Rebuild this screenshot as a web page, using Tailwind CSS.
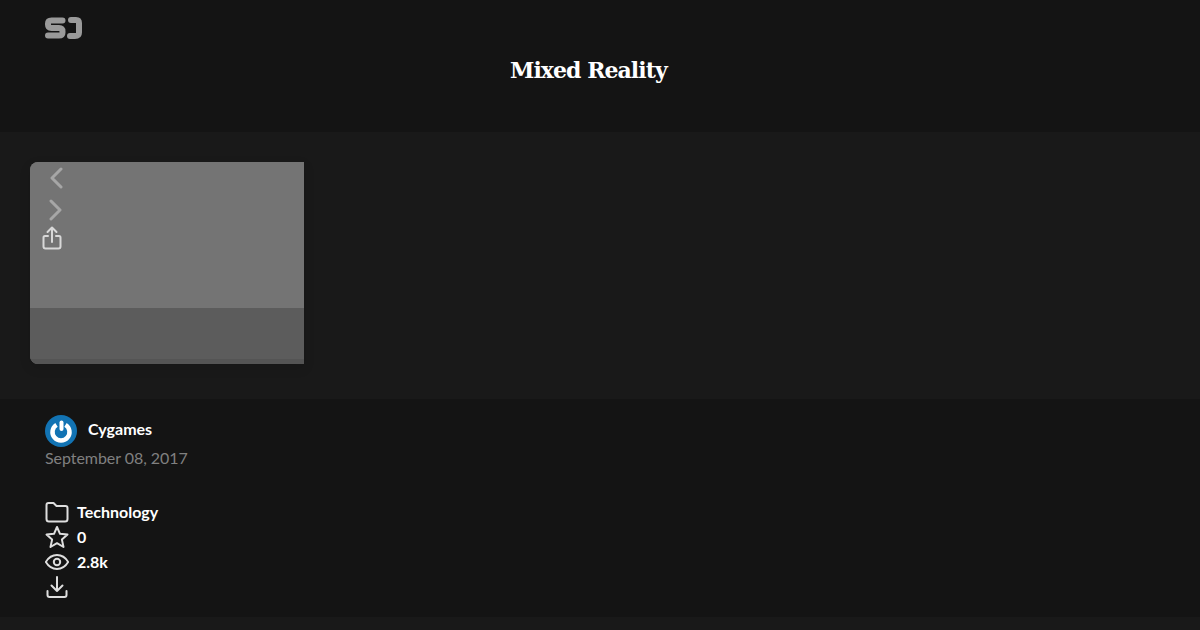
<!DOCTYPE html>
<html lang="en">
  <head>
    <meta charset="UTF-8" />
    <title>Mixed Reality</title>
    <script src="https://cdn.jsdelivr.net/npm/@tailwindcss/browser@4"></script>
  </head>
  <body class="h-[630px] overflow-hidden bg-[#191919] font-['Lato',sans-serif] text-white">
    <!-- header -->
    <header class="h-[132px] bg-[#141414] pl-[45px] pt-[16px]">
      <svg class="block h-[24px] w-[37px]" viewBox="0 0 37 24" fill="none" stroke="#9a9a9a" stroke-width="6" stroke-linecap="round">
        <path d="M17.500 4.500H6.500Q3 4.500 3 7.500V8.500Q3 12 6.500 12H14Q17.500 12 17.500 15.500V16.500Q17.500 19.500 14 19.500H3" />
        <path d="M26 4H31Q34 4 34 7V16.500Q34 20 30 20H25" />
      </svg>
      <h1 class="mt-[14px] ml-[465px] font-['DejaVu_Serif',serif] text-[22px] leading-[32px] font-bold tracking-[-0.95px] text-white">Mixed Reality</h1>
    </header>

    <!-- carousel band -->
    <section class="h-[267px] bg-[#191919] pl-[30px] pt-[30px]">
      <div class="relative flex h-[202px] w-[274px] flex-col overflow-hidden rounded-l-[8px] bg-[#707070] shadow-[0_4px_12px_rgba(0,0,0,0.12)]">
        <div class="h-[146px] bg-[#747474]"></div>
        <div class="h-[51px] bg-[#5c5c5c]"></div>
        <div class="h-[5px] bg-[#545454]"></div>
        <svg class="absolute left-[18px] top-[5px] h-[22px] w-[16px]" viewBox="0 0 16 22" fill="none" stroke="#a6a6a6" stroke-width="3" stroke-linecap="round" stroke-linejoin="round">
          <path d="M13 2L4 11L13 20" />
        </svg>
        <svg class="absolute left-[18px] top-[37px] h-[22px] w-[16px]" viewBox="0 0 16 22" fill="none" stroke="#a6a6a6" stroke-width="3" stroke-linecap="round" stroke-linejoin="round">
          <path d="M3 2L12 11L3 20" />
        </svg>
        <svg class="absolute left-[12px] top-[64px] h-[24px] w-[20px]" viewBox="0 0 20 24" fill="none" stroke="#d8d8d8" stroke-width="2" stroke-linecap="round" stroke-linejoin="round">
          <path d="M6 10H3Q1.500 10 1.500 11.500V20.500Q1.500 22.500 3.500 22.500H16.500Q18.500 22.500 18.500 20.500V11.500Q18.500 10 17 10H14" />
          <path d="M10 16V1.500M5.500 6L10 1.500L14.500 6" />
        </svg>
      </div>
    </section>

    <!-- details -->
    <section class="h-[218px] bg-[#141414] pl-[45px] pt-[16px]">
      <div class="flex h-[28px] items-start gap-[11px]">
        <svg class="h-[32px] w-[32px] shrink-0" viewBox="0 0 32 32" fill="none">
          <circle cx="16" cy="16" r="16" fill="#1273b3" />
          <path d="M11.500 9.800A8.500 8.500 0 1 0 20.500 9.800" stroke="#ffffff" stroke-width="4.500" />
          <path d="M16.500 7.500V14" stroke="#ffffff" stroke-width="4" stroke-linecap="round" />
        </svg>
        <span class="text-[16px] leading-[28px] font-bold">Cygames</span>
      </div>
      <p class="mt-[3px] text-[16px] leading-[24px] tracking-[-0.05px] text-[#808080]">September 08, 2017</p>

      <ul class="mt-[29px] flex flex-col text-[16px] font-bold">
        <li class="flex h-[25px] items-center gap-[8px]">
          <svg class="h-[24px] w-[24px]" viewBox="0 0 24 24" fill="none" stroke="#dedede" stroke-width="2" stroke-linejoin="round">
            <path d="M1.500 5Q1.500 3 3.500 3H8.500L11.500 6H20.500Q22.500 6 22.500 8V19Q22.500 21.500 20 21.500H4Q1.500 21.500 1.500 19Z" />
          </svg>
          <span>Technology</span>
        </li>
        <li class="flex h-[25px] items-center gap-[8px]">
          <svg class="h-[24px] w-[24px]" viewBox="0 0 24 24" fill="none" stroke="#dedede" stroke-width="2" stroke-linejoin="round">
            <path d="M12 2L15 8.800L22.500 9.600L16.900 14.600L18.500 22L12 18.200L5.500 22L7.100 14.600L1.500 9.600L9 8.800Z" />
          </svg>
          <span>0</span>
        </li>
        <li class="flex h-[25px] items-center gap-[8px]">
          <svg class="h-[24px] w-[24px]" viewBox="0 0 24 24" fill="none" stroke="#dedede" stroke-width="2" stroke-linejoin="round">
            <path d="M0.800 12C3.500 7.500 7.500 5 12 5C16.500 5 20.500 7.500 23.200 12C20.500 16.500 16.500 19 12 19C7.500 19 3.500 16.500 0.800 12Z" />
            <circle cx="12" cy="12" r="3.200" />
          </svg>
          <span>2.8k</span>
        </li>
        <li class="flex h-[25px] items-center gap-[8px]">
          <svg class="h-[24px] w-[24px]" viewBox="0 0 24 24" fill="none" stroke="#dedede" stroke-width="2" stroke-linecap="round" stroke-linejoin="round">
            <path d="M12 2V16M6.500 10.500L12 16L17.500 10.500" />
            <path d="M2.500 16V20Q2.500 22 4.500 22H19.500Q21.500 22 21.500 20V16" />
          </svg>
        </li>
      </ul>
    </section>
  </body>
</html>
